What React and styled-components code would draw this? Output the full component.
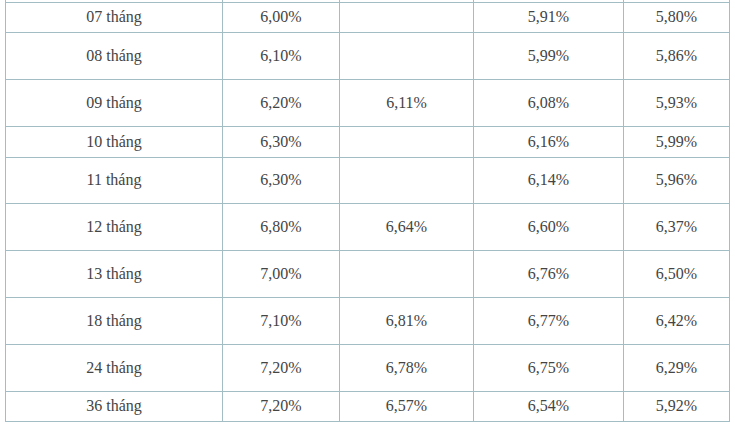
import React from "react";
import styled, { createGlobalStyle } from "styled-components";

const Global = createGlobalStyle`
  html, body { margin: 0; padding: 0; background: #fff; }
  body { font-family: "Liberation Serif", "DejaVu Serif", serif; }
`;

const Wrap = styled.div`
  padding: 0 5px;
`;

const Table = styled.table`
  border-collapse: collapse;
  table-layout: fixed;
  width: 725px;
  font-family: "Liberation Serif", "DejaVu Serif", serif;
  font-size: 16px;
  color: #444;
`;

const Row = styled.tr`
  height: ${(p) => p.$h}px;
`;

const Cell = styled.td`
  border: 1px solid #a3bdc4;
  border-top-style: ${(p) => (p.$open ? "none" : "solid")};
  font-family: "Liberation Serif", "DejaVu Serif", serif;
  text-align: center;
  vertical-align: middle;
  padding: 0;
  line-height: 18px;
`;

const widths = [217, 117, 134, 150, 106];

const rows = [
  ["07 tháng", "6,00%", "", "5,91%", "5,80%", 30],
  ["08 tháng", "6,10%", "", "5,99%", "5,86%", 47],
  ["09 tháng", "6,20%", "6,11%", "6,08%", "5,93%", 47],
  ["10 tháng", "6,30%", "", "6,16%", "5,99%", 31],
  ["11 tháng", "6,30%", "", "6,14%", "5,96%", 46],
  ["12 tháng", "6,80%", "6,64%", "6,60%", "6,37%", 47],
  ["13 tháng", "7,00%", "", "6,76%", "6,50%", 47],
  ["18 tháng", "7,10%", "6,81%", "6,77%", "6,42%", 47],
  ["24 tháng", "7,20%", "6,78%", "6,75%", "6,29%", 47],
  ["36 tháng", "7,20%", "6,57%", "6,54%", "5,92%", 30],
];

export default function App() {
  return (
    <>
      <Global />
      <Wrap>
        <Table>
          <colgroup>
            {widths.map((w, i) => (
              <col key={i} style={{ width: w }} />
            ))}
          </colgroup>
          <tbody>
            <Row $h={2}>
              {widths.map((_, j) => (
                <Cell key={j} $open />
              ))}
            </Row>
            {rows.map((r, i) => (
              <Row key={i} $h={r[5]}>
                {r.slice(0, 5).map((c, j) => (
                  <Cell key={j}>{c}</Cell>
                ))}
              </Row>
            ))}
          </tbody>
        </Table>
      </Wrap>
    </>
  );
}
